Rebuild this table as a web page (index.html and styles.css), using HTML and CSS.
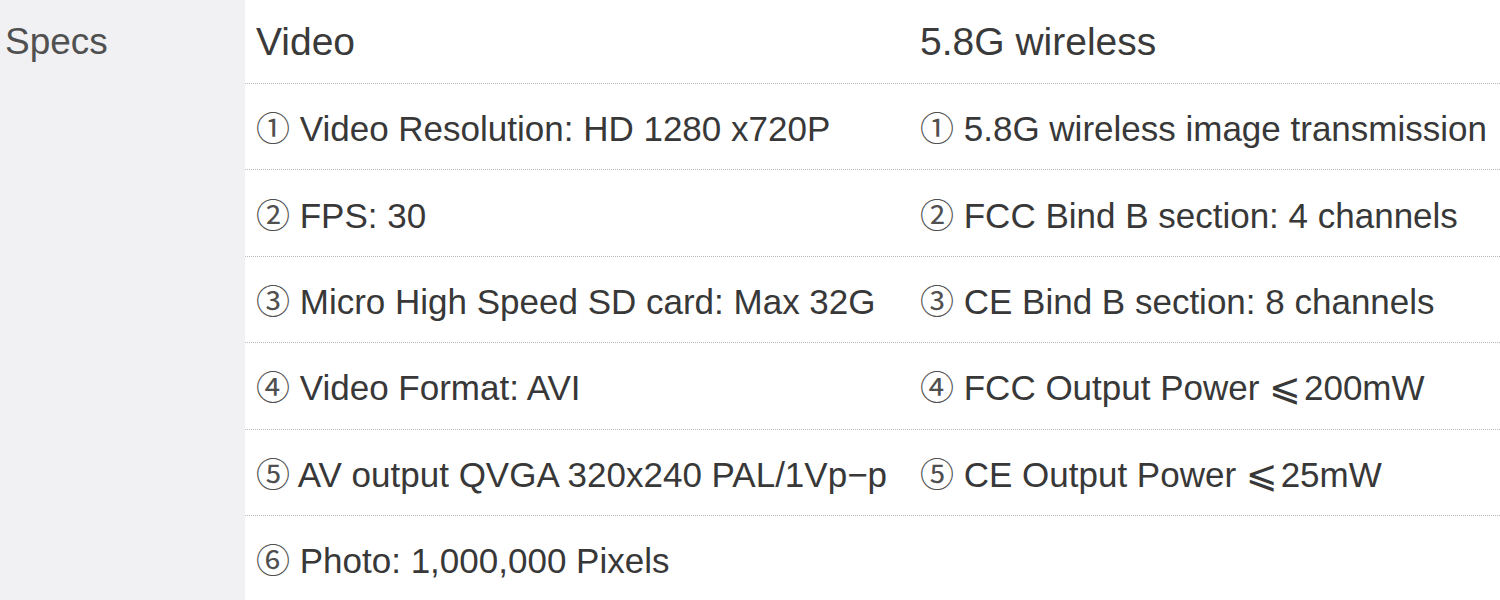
FILE: index.html
```html
<!DOCTYPE html>
<html lang="en">
<head>
<meta charset="utf-8">
<title>Specs</title>
<link rel="stylesheet" href="styles.css">
</head>
<body>
<div class="specs">
  <aside class="label">Specs</aside>
  <section class="table">
    <div class="row head">
      <div class="cell">Video</div>
      <div class="cell c2">5.8G wireless</div>
    </div>
    <div class="row">
      <div class="cell"><span class="num">①</span> Video Resolution: HD 1280 x720P</div>
      <div class="cell c2"><span class="num">①</span> 5.8G wireless image transmission</div>
    </div>
    <div class="row">
      <div class="cell"><span class="num">②</span> FPS: 30</div>
      <div class="cell c2"><span class="num">②</span> FCC Bind B section: 4 channels</div>
    </div>
    <div class="row">
      <div class="cell"><span class="num">③</span> Micro High Speed SD card: Max 32G</div>
      <div class="cell c2"><span class="num">③</span> CE Bind B section: 8 channels</div>
    </div>
    <div class="row">
      <div class="cell"><span class="num">④</span> Video Format: AVI</div>
      <div class="cell c2"><span class="num">④</span> FCC Output Power <span class="le">⩽</span>200mW</div>
    </div>
    <div class="row">
      <div class="cell"><span class="num">⑤</span> AV output QVGA 320x240 PAL/1Vp−p</div>
      <div class="cell c2"><span class="num">⑤</span> CE Output Power <span class="le">⩽</span>25mW</div>
    </div>
    <div class="row">
      <div class="cell"><span class="num">⑥</span> Photo: 1,000,000 Pixels</div>
      <div class="cell c2"></div>
    </div>
  </section>
</div>
</body>
</html>
```

FILE: styles.css
```css
html, body {
  margin: 0;
  padding: 0;
  background: #ffffff;
}
body {
  font-family: "Liberation Sans", Arial, "Noto Sans CJK SC", sans-serif;
  color: #383838;
  font-size: 35px;
  overflow: hidden;
  width: 1500px;
  height: 600px;
}
.specs {
  display: flex;
  height: 600px;
}
.label {
  width: 240px;
  flex: 0 0 240px;
  padding-left: 5px;
  background: #f1f1f3;
  color: #505050;
  font-size: 37px;
  line-height: 84px;
}
.table {
  flex: 1;
  display: flex;
  flex-direction: column;
}
.row {
  display: flex;
  align-items: center;
  height: 86.4px;
  flex: 0 0 86.4px;
  box-sizing: border-box;
  border-top: 1px dotted #b9b9b9;
  white-space: nowrap;
}
.row.head {
  height: 83px;
  flex-basis: 83px;
  border-top: none;
  font-size: 39px;
  color: #3a3a3a;
}
.cell {
  width: 654px;
  flex: 0 0 654px;
  padding-left: 11px;
}
.cell.c2 {
  flex: 1;
  padding-left: 10px;
}
.num {
  font-family: "Noto Sans CJK SC", "DejaVu Sans", sans-serif;
  color: #505050;
  font-size: 34px;
}
.le {
  font-family: "DejaVu Sans", sans-serif;
  font-size: 38px;
  line-height: 1;
  margin-right: 3px;
}
```
